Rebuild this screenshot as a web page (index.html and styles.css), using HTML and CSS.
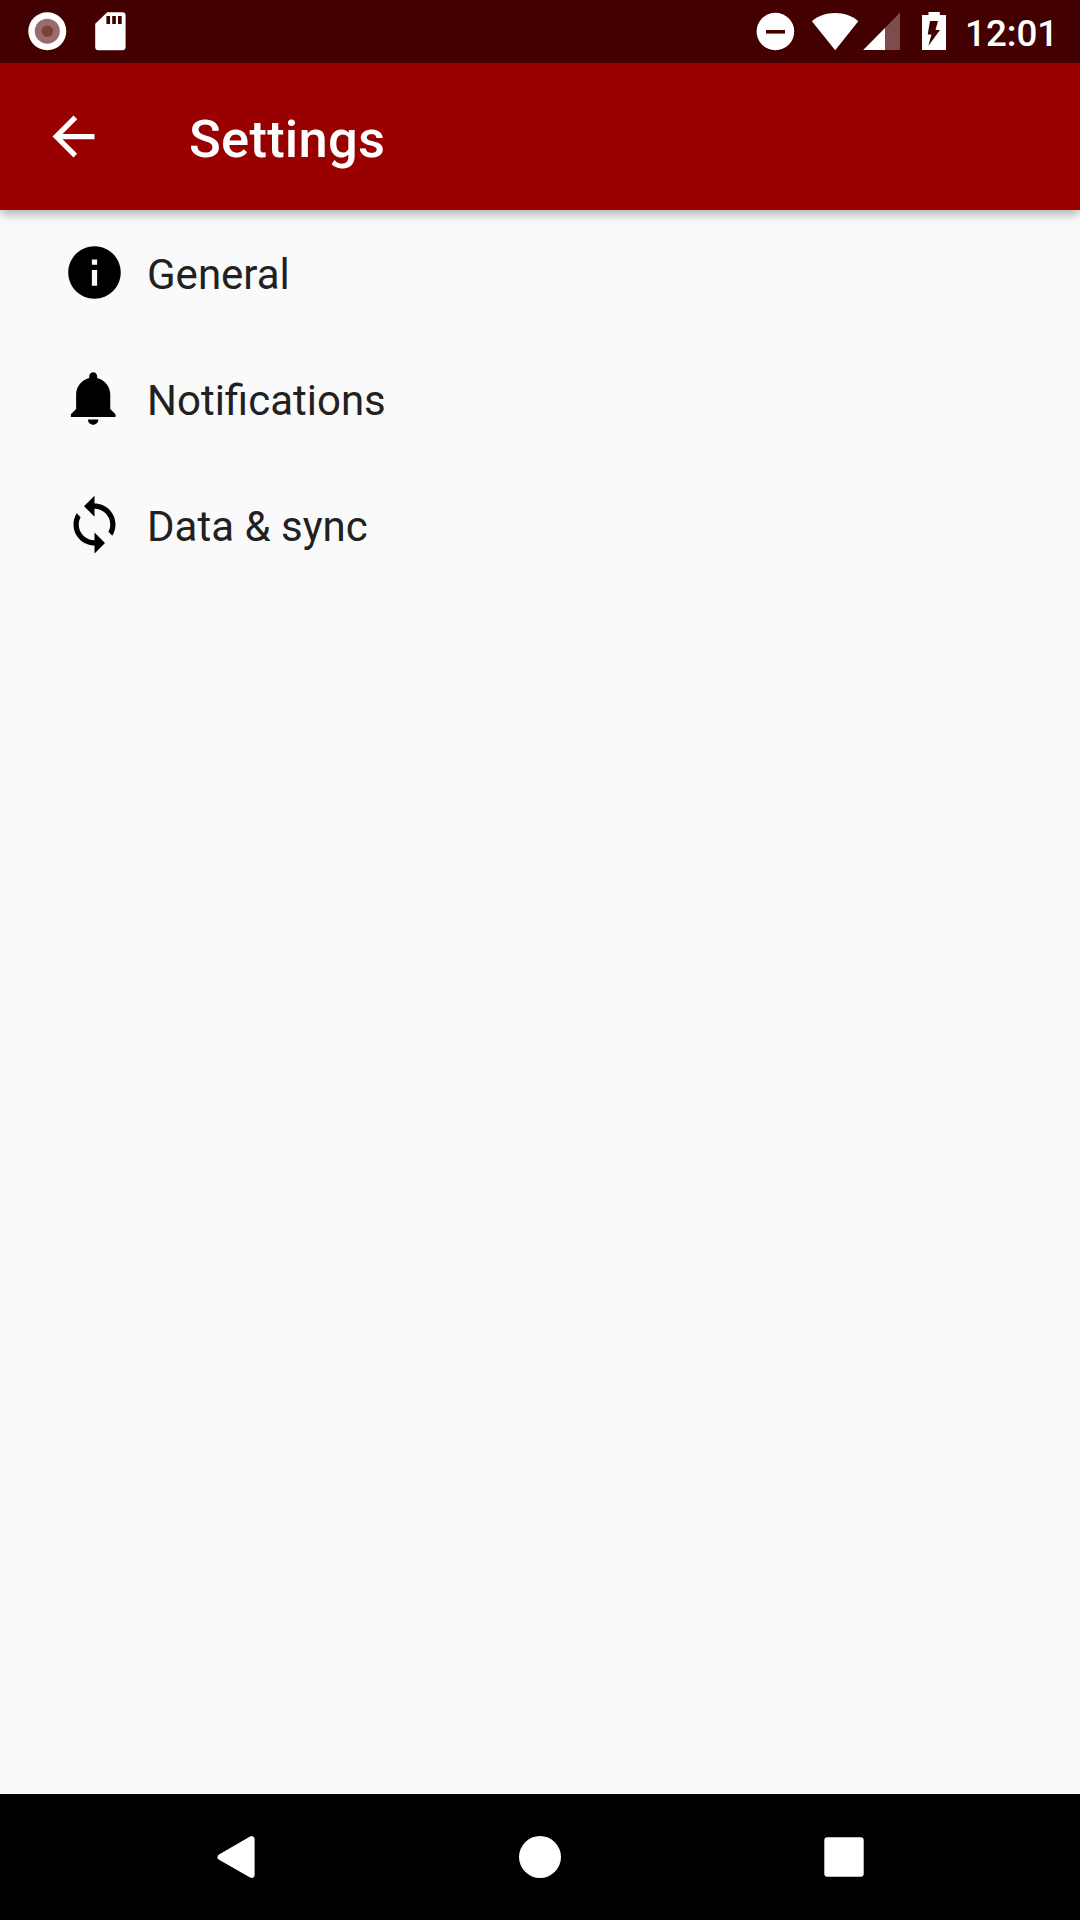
FILE: index.html
```html
<!DOCTYPE html>
<html lang="en">
<head>
<meta charset="utf-8">
<title>Settings</title>
<link rel="stylesheet" href="styles.css">
</head>
<body>
<div class="screen">
  <div class="status-bar">
    <svg class="record-icon" width="40" height="40" viewBox="0 0 40 40"><circle cx="20.3" cy="20.2" r="19" fill="#fff"/><circle cx="20.3" cy="20.2" r="12.5" fill="#9a6b6b"/><circle cx="20.3" cy="20.2" r="5.7" fill="#784040"/></svg>
    <svg class="sd-icon" width="32" height="40" viewBox="0 0 32 40"><path fill="#fff" fill-rule="evenodd" d="M12.2 1.3H27.300a3.3 3.3 0 0 1 3.3 3.3V35.900a3.3 3.3 0 0 1-3.3 3.3H3.500A3.3 3.3 0 0 1 .2 35.900V12.700ZM11.400 5v8h3.700V5zM17.200 5v8h3.700V5zM23 5v8h3.700V5z"/></svg>
    <div class="system-icons">
      <svg width="40" height="40" viewBox="0 0 40 40"><circle cx="20.400" cy="20.500" r="18.800" fill="#fff"/><path fill="#430000" d="M11 19h19v3.600H11z"/></svg>
      <svg class="wifi-icon" width="48" height="40" viewBox="0 0 48 40"><path fill="#fff" d="M24.200 39.300 47.300 10.200C42 5.200 33.500 2 24.200 2S6.200 5.200.9 10.200Z"/></svg>
      <svg class="signal-icon" width="38" height="40" viewBox="0 0 38 40"><path fill="#fff" fill-opacity=".3" d="M37 1.500V39H22V17z"/><path fill="#fff" d="M22 17v22H.2z"/></svg>
      <svg class="battery-icon" width="24" height="40" viewBox="0 0 24 40"><path fill="#fff" d="M6.500 1h11.300v3H24v35H0V4h6.500z"/><path fill="#430000" d="M8 10h8l-2.500 9H18L6.300 35 9.500 23.500H5.700z"/></svg>
      <span class="clock">12:01</span>
    </div>
  </div>
  <header class="app-bar">
    <svg width="63" height="63" viewBox="0 0 24 24"><path fill="#fff" d="M20 11H7.830l5.590-5.590L12 4l-8 8 8 8 1.410-1.410L7.830 13H20v-2z"/></svg>
    <h1 class="title">Settings</h1>
  </header>
  <main class="settings">
    <div class="item">
      <svg class="item-icon" width="63" height="63" viewBox="0 0 24 24"><path d="M12 2C6.480 2 2 6.480 2 12s4.480 10 10 10 10-4.480 10-10S17.520 2 12 2zm1 15h-2v-6h2v6zm0-8h-2V7h2v2z"/></svg>
      <span class="label">General</span>
    </div>
    <div class="item">
      <svg class="item-icon" width="63" height="63" viewBox="0 0 24 24"><path d="M11.500 22c1.100 0 2-.9 2-2h-4c0 1.100.9 2 2 2zm6.500-6v-5.500c0-3.070-2.130-5.640-5-6.320V3.500c0-.83-.67-1.500-1.500-1.500S10 2.670 10 3.500v.68c-2.870.68-5 3.250-5 6.320V16l-2 2v1h17v-1l-2-2z"/></svg>
      <span class="label">Notifications</span>
    </div>
    <div class="item">
      <svg class="item-icon" width="63" height="63" viewBox="0 0 24 24"><path d="M12 4V1L8 5l4 4V6c3.310 0 6 2.690 6 6 0 1.010-.25 1.970-.7 2.800l1.460 1.460C19.540 15.030 20 13.570 20 12c0-4.420-3.580-8-8-8zm0 14c-3.310 0-6-2.690-6-6 0-1.010.25-1.970.7-2.800L5.240 7.740C4.460 8.970 4 10.430 4 12c0 4.420 3.580 8 8 8v3l4-4-4-4v3z"/></svg>
      <span class="label">Data &amp; sync</span>
    </div>
  </main>
  <nav class="nav-bar">
    <svg width="64" height="64" viewBox="0 0 64 64"><path fill="#fff" stroke="#fff" stroke-width="6" stroke-linejoin="round" d="M16.500 32.200 47.600 14.200V50z"/></svg>
    <svg width="64" height="64" viewBox="0 0 64 64"><circle cx="32" cy="32" r="21" fill="#fff"/></svg>
    <svg width="64" height="64" viewBox="0 0 64 64"><rect x="12.300" y="12.200" width="39.400" height="39.600" rx="3" fill="#fff"/></svg>
  </nav>
</div>
</body>
</html>
```
FILE: styles.css
```css
body {
  margin: 0;
  font-family: Roboto, sans-serif;
}

svg {
  display: block;
  flex: none;
}

.screen {
  display: flex;
  flex-direction: column;
  width: 1080px;
  height: 1920px;
  background: #fafafa;
}

.status-bar {
  display: flex;
  align-items: center;
  box-sizing: border-box;
  height: 63px;
  padding: 0 26px 1px 27px;
  background: #430000;
}

.sd-icon {
  margin-left: 28px;
}

.system-icons {
  display: flex;
  align-items: center;
  margin-left: auto;
}

.wifi-icon {
  margin-left: 16px;
}

.signal-icon {
  margin-left: 4px;
}

.battery-icon {
  margin-left: 21px;
}

.clock {
  width: 89px;
  margin-left: 19px;
  padding-top: 5px;
  color: #fff;
  font-size: 36.75px;
  font-weight: 500;
  line-height: 40px;
  white-space: nowrap;
}

.app-bar {
  display: flex;
  align-items: center;
  gap: 84px;
  height: 147px;
  padding-left: 42px;
  background: #990000;
  box-shadow: 0 5px 10px -1px rgba(0, 0, 0, 0.31);
}

.title {
  margin: 0;
  padding-top: 5px;
  color: #fff;
  font-size: 52.5px;
  font-weight: 500;
  letter-spacing: 0.25px;
  line-height: 62px;
}

.settings {
  flex: 1;
}

.item {
  display: flex;
  align-items: center;
  gap: 21px;
  height: 126px;
  padding-left: 63px;
}

.item-icon {
  margin-bottom: 2px;
}

.label {
  padding-top: 3px;
  color: #212121;
  font-size: 42px;
  line-height: 50px;
}

.nav-bar {
  display: flex;
  align-items: center;
  justify-content: center;
  gap: 240px;
  height: 126px;
  background: #000;
}
```
